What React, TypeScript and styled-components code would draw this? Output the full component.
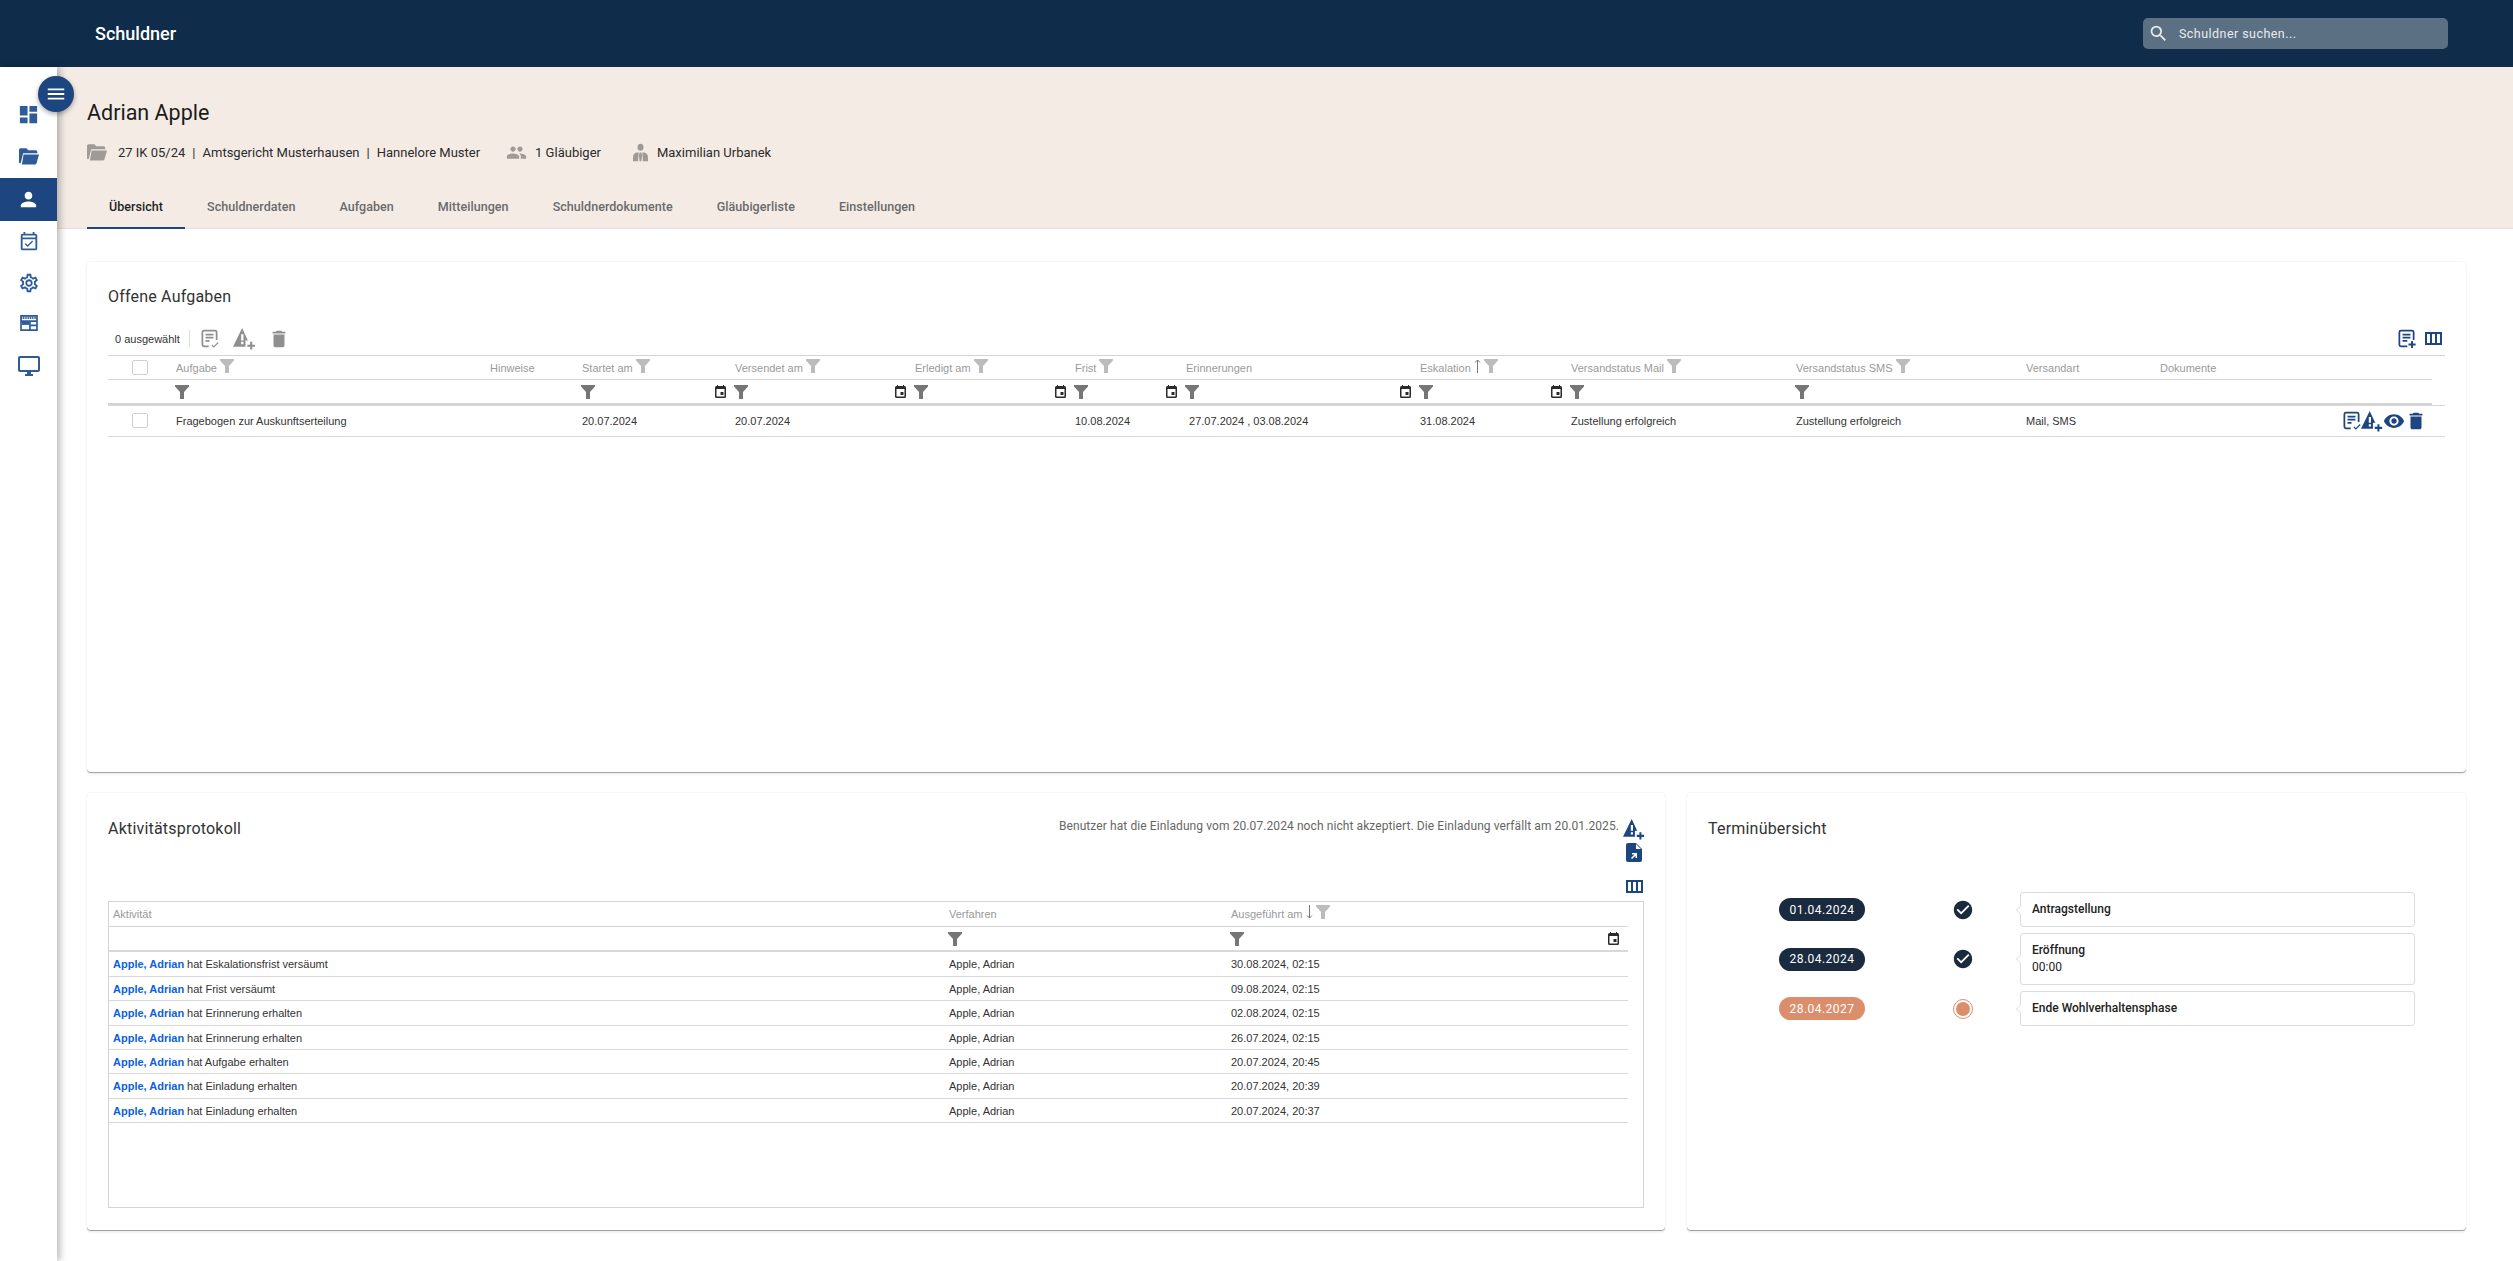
import React from 'react';
import styled, { createGlobalStyle } from 'styled-components';
import {
  MdDashboard,
  MdPerson,
  MdOutlineEventAvailable,
  MdOutlineSettings,
  MdOutlineDesktopWindows,
  MdMenu,
  MdSearch,
  MdVisibility,
  MdDelete,
  MdCheckCircle,
  MdPeople,
} from 'react-icons/md';

const NAVY = '#1d4580';
const TASK_COLUMNS =
  '68px 314px 92px 153px 180px 160px 111px 234px 151px 225px 230px 134px 1fr';
const LOG_COLUMNS = '840px 282px 1fr';

const GlobalStyle = createGlobalStyle`
  html, body {
    margin: 0;
    padding: 0;
    background: #ffffff;
  }
  body {
    font-family: Roboto, "Liberation Sans", sans-serif;
    color: #222222;
  }
`;

const Page = styled.div`
  width: 2513px;
  height: 1261px;
  display: flex;
  flex-direction: column;
  overflow: hidden;
`;

const TopBar = styled.header`
  height: 67px;
  flex: none;
  background: #0f2c4a;
  display: flex;
  align-items: center;
  justify-content: space-between;
  padding: 0 65px 0 95px;
`;

const AppTitle = styled.div`
  color: #ffffff;
  font-size: 18px;
  font-weight: 500;
`;

const SearchBox = styled.div`
  width: 305px;
  height: 31px;
  box-sizing: border-box;
  margin-top: -1px;
  padding-left: 5px;
  border-radius: 5px;
  background: #5c7084;
  color: #e8ebee;
  display: flex;
  align-items: center;
  gap: 10px;
  font-size: 12.5px;
  letter-spacing: 0.45px;
`;

const Body = styled.div`
  flex: 1;
  display: flex;
  position: relative;
`;

const Sidebar = styled.nav`
  width: 57px;
  flex: none;
  box-sizing: border-box;
  padding-top: 26px;
  background: #ffffff;
  box-shadow: 3px 0 7px rgba(0, 0, 0, 0.28);
  position: relative;
  z-index: 1;
  display: flex;
  flex-direction: column;
`;

const NavItem = styled.div<{ $active?: boolean; $height: number }>`
  height: ${p => p.$height}px;
  display: flex;
  align-items: center;
  justify-content: center;
  background: ${p => (p.$active ? NAVY : 'transparent')};
  color: ${p => (p.$active ? '#ffffff' : '#2f5c98')};
`;

const MenuButton = styled.button`
  position: absolute;
  left: 38px;
  top: 9px;
  z-index: 2;
  width: 36px;
  height: 36px;
  padding: 0;
  border: none;
  border-radius: 50%;
  background: ${NAVY};
  color: #ffffff;
  display: flex;
  align-items: center;
  justify-content: center;
  box-shadow: 0 2px 5px rgba(0, 0, 0, 0.35);
`;

const Main = styled.main`
  flex: 1;
  min-width: 0;
`;

const Banner = styled.section`
  height: 162px;
  box-sizing: border-box;
  padding: 31px 0 0 30px;
  background: #f4ebe5;
  border-bottom: 1px solid #e6e1dd;
  display: flex;
  flex-direction: column;
`;

const DebtorName = styled.h1`
  margin: 0;
  font-size: 21.5px;
  line-height: 30px;
  font-weight: 400;
  color: #1c1c1c;
`;

const InfoRow = styled.div`
  margin-top: 12px;
  height: 24px;
  display: flex;
  align-items: center;
  font-size: 13px;
  color: #2b2b2b;
`;

const InfoItem = styled.div<{ $gap: number; $left?: number }>`
  display: flex;
  align-items: center;
  gap: ${p => p.$gap}px;
  margin-left: ${p => p.$left ?? 0}px;
  color: #2b2b2b;

  svg {
    color: #a09a96;
    flex: none;
  }
`;

const Pipe = styled.span`
  margin: 0 7px;
`;

const Tabs = styled.div`
  margin-top: auto;
  display: flex;
`;

const Tab = styled.div<{ $active?: boolean }>`
  height: 44px;
  box-sizing: border-box;
  padding: 1px 22px 0;
  display: flex;
  align-items: center;
  font-size: 12.5px;
  font-weight: 500;
  letter-spacing: 0.05px;
  color: ${p => (p.$active ? '#1f1f1f' : '#6a6a6a')};
  border-bottom: 2px solid ${p => (p.$active ? NAVY : 'transparent')};
  margin-bottom: -1px;
`;

const Content = styled.div`
  padding: 33px 47px 0 30px;
  display: flex;
  flex-direction: column;
  gap: 21px;
`;

const Card = styled.section<{ $height: number; $top: number }>`
  height: ${p => p.$height}px;
  box-sizing: border-box;
  padding: ${p => p.$top}px 21px 0;
  background: #ffffff;
  border-radius: 4px;
  box-shadow: 0 1px 0 #a4a4a4, 0 0 0 1px #f6f6f6, 0 2px 3px rgba(0, 0, 0, 0.1);
`;

const CardTitle = styled.h2`
  margin: 0;
  font-size: 16px;
  line-height: 20px;
  font-weight: 400;
  letter-spacing: 0.2px;
  color: #333333;
`;

const Toolbar = styled.div`
  height: 48px;
  box-sizing: border-box;
  padding: 15px 3px 0 7px;
  display: flex;
  align-items: center;
  font-family: "Liberation Sans", sans-serif;
  font-size: 11px;
  color: #333333;
`;

const ToolDivider = styled.span`
  width: 1px;
  height: 17px;
  margin: 0 10px 0 9px;
  background: #dddddd;
`;

const ToolIcon = styled.span<{ $color?: string; $gap?: number }>`
  display: flex;
  color: ${p => p.$color ?? '#8f8f8f'};
  margin-right: ${p => p.$gap ?? 0}px;
`;

const ToolSpacer = styled.span`
  flex: 1;
`;

const TaskTable = styled.div`
  border-top: 1px solid #d4d4d4;
  font-family: "Liberation Sans", sans-serif;
  font-size: 11px;
`;

const Row = styled.div<{ $columns: string; $height: number; $inset?: number; $line?: string }>`
  display: grid;
  grid-template-columns: ${p => p.$columns};
  height: ${p => p.$height}px;
  box-sizing: border-box;
  margin-right: ${p => p.$inset ?? 0}px;
  border-bottom: ${p => p.$line ?? '1px solid #d8d8d8'};
`;

// first data row runs one pixel under the filter row, its top line shows past the end of it
const JoinedRow = styled(Row)`
  margin-top: -1px;
  box-shadow: inset 0 1px 0 #d8d8d8;
`;

const HeadCell = styled.div`
  display: flex;
  align-items: center;
  gap: 3px;
  color: #9a9a9a;
  white-space: nowrap;
  min-width: 0;

  > svg {
    margin-bottom: 4px;
    color: #bcbcbc;
    flex: none;
  }
`;

const FilterCell = styled.div`
  display: flex;
  align-items: center;
  justify-content: space-between;
  padding: 0 9px 0 0;
  min-width: 0;

  > svg:first-child {
    margin-left: -1px;
    color: #767676;
  }
`;

const DataCell = styled.div`
  display: flex;
  align-items: center;
  color: #333333;
  white-space: nowrap;
  min-width: 0;
`;

const CheckCell = styled.div`
  display: flex;
  align-items: center;
  padding-left: 24px;
`;

const CheckBox = styled.span`
  width: 14px;
  height: 13px;
  border: 1px solid #cfcfcf;
  border-radius: 2px;
`;

const RowActions = styled.div`
  display: flex;
  align-items: center;
  justify-content: flex-end;
  padding-right: 18px;
  color: ${NAVY};
`;

const BottomRow = styled.div`
  display: grid;
  grid-template-columns: 1578px 779px;
  gap: 22px;
`;

const LogHead = styled.div`
  height: 82px;
  display: flex;
  justify-content: space-between;
  align-items: flex-start;
`;

const InviteNotice = styled.div`
  display: flex;
  align-items: flex-start;
  gap: 5px;
  font-size: 12px;
  line-height: 14px;
  letter-spacing: 0.09px;
  color: #666666;
`;

const IconStack = styled.div`
  width: 20px;
  margin-top: -1px;
  display: flex;
  flex-direction: column;
  align-items: center;
  gap: 3px;
  color: ${NAVY};
`;

const ColumnsSlot = styled.span`
  display: flex;
  margin-top: 15px;
`;

const LogTable = styled.div`
  height: 307px;
  box-sizing: border-box;
  border: 1px solid #d4d4d4;
  font-family: "Liberation Sans", sans-serif;
  font-size: 11px;
`;

const LogFirstCell = styled(DataCell)`
  padding-left: 4px;
`;

const LogHeadFirst = styled(HeadCell)`
  padding-left: 4px;
`;

const UserName = styled.span`
  color: #0b5fe0;
  font-weight: 700;
  margin-right: 3px;
`;

const Timeline = styled.div`
  margin-top: 53px;
  padding-left: 71px;
  display: flex;
  flex-direction: column;
  gap: 6px;
`;

const TimelineRow = styled.div`
  display: grid;
  grid-template-columns: 175px 66px 395px;
  align-items: center;
`;

const DatePill = styled.div<{ $color: string }>`
  width: 86px;
  height: 23px;
  border-radius: 12px;
  background: ${p => p.$color};
  color: #ffffff;
  font-size: 12px;
  letter-spacing: 0.45px;
  display: flex;
  align-items: center;
  justify-content: center;
`;

const Marker = styled.div`
  display: flex;
  margin-left: -2px;
  color: #1a2a3f;
`;

const OpenMarker = styled.span`
  width: 14px;
  height: 14px;
  margin-left: 2px;
  border: 2px solid #ffffff;
  outline: 1px solid #dc8e6c;
  border-radius: 50%;
  background: #dc8e6c;
`;

const EventBox = styled.div`
  position: relative;
  box-sizing: border-box;
  padding: 8px 11px;
  border: 1px solid #dcdcdc;
  border-radius: 3px;
  background: #ffffff;
  font-size: 12px;
  line-height: 17px;
  color: #222222;

  &::before {
    content: '';
    position: absolute;
    left: -5px;
    top: 50%;
    width: 9px;
    height: 9px;
    background: #ffffff;
    border-left: 1px solid #dcdcdc;
    border-bottom: 1px solid #dcdcdc;
    transform: translateY(-50%) rotate(45deg) scaleX(0.7) scaleY(0.7);
  }
`;

const EventTitle = styled.div`
  font-weight: 500;
`;

type IconProps = { size?: number; w?: number; h?: number };

const Funnel = ({ w = 14, h = 14 }: IconProps) => (
  <svg width={w} height={h} viewBox="0 0 14 14" fill="currentColor">
    <path d="M0 0h14v1.5L9 7v7H5V7L0 1.5z" />
  </svg>
);

const SmallCalendar = () => (
  <svg width="11" height="13" viewBox="0 0 11 13" style={{ color: '#2a2a2a' }}>
    <path
      fill="currentColor"
      d="M2 0h1v1h5V0h1v1h.5A1.5 1.5 0 0 1 11 2.5v9A1.5 1.5 0 0 1 9.500 13h-8A1.500 1.500 0 0 1 0 11.500v-9A1.500 1.500 0 0 1 1.500 1H2z"
    />
    <path fill="#ffffff" d="M1.500 4h8v7.500h-8z" />
    <path fill="currentColor" d="M5.500 7h3v3h-3z" />
  </svg>
);

const TaskDone = ({ size = 18 }: IconProps) => (
  <svg width={size} height={size} viewBox="0 0 24 24" fill="none" stroke="currentColor">
    <path strokeWidth="2.200" d="M11 22H5a2 2 0 0 1-2-2V4a2 2 0 0 1 2-2h14a2 2 0 0 1 2 2v10" />
    <path strokeWidth="2.200" d="M7 7h10M7 11h10M7 15h5" />
    <path strokeWidth="1.500" d="M15 20l2.500 2.500L23 17" />
  </svg>
);

const TaskAdd = ({ size = 18 }: IconProps) => (
  <svg width={size} height={size} viewBox="0 0 24 24" fill="none" stroke="currentColor">
    <path strokeWidth="2.200" d="M13 22H5a2 2 0 0 1-2-2V4a2 2 0 0 1 2-2h14a2 2 0 0 1 2 2v10" />
    <path strokeWidth="2.200" d="M7 7h10M7 11h10M7 15h6" />
    <path strokeWidth="2.400" d="M19 15v9M14.500 19.500h9" />
  </svg>
);

const WarnAdd = ({ size = 22 }: IconProps) => (
  <svg width={size} height={size} viewBox="0 0 24 24">
    <path fill="currentColor" d="M9.500 1l9 19.500H0z" />
    <path fill="#ffffff" d="M8.500 7.500h2.400v6.500H8.500zM8.500 15.500h2.400v2.400H8.500z" />
    <path fill="#ffffff" d="M13 14h11v10H13z" />
    <path stroke="currentColor" strokeWidth="2.200" d="M19 15.500v8M15 19.500h8" />
  </svg>
);

const ColumnsIcon = ({ w = 17, h = 13 }: IconProps) => (
  <svg width={w} height={h} viewBox="0 0 17 13" fill="none" stroke="currentColor" strokeWidth="2">
    <path d="M1 1h15v11H1zM6 1v11M11 1v11" />
  </svg>
);

const FileMove = () => (
  <svg width="16" height="19" viewBox="0 0 16 19">
    <path fill="currentColor" d="M2 0h8l6 6v11a2 2 0 0 1-2 2H2a2 2 0 0 1-2-2V2a2 2 0 0 1 2-2z" />
    <path fill="#ffffff" d="M6 10h5v5H9.500v-2.300L6 16l-1-1 3.400-3.500H6zM10 1l5 5h-5z" />
  </svg>
);

const FolderOpen = ({ size = 22, w, h }: IconProps) => (
  <svg width={w ?? size} height={h ?? size} viewBox="0 0 24 20" fill="currentColor">
    <path d="M2 0h7l2 2.500h9a2 2 0 0 1 2 2V6H5L2 18H1.500A1.500 1.500 0 0 1 0 16.500V2a2 2 0 0 1 2-2z" />
    <path d="M5.500 7.500H24l-3 10.500a2 2 0 0 1-2 1.500H3.500z" />
  </svg>
);

const BoardLayout = () => (
  <svg width="18" height="16" viewBox="0 0 19 17" fill="none" stroke="currentColor" strokeWidth="1.800">
    <path d="M1 1h17v15H1z" />
    <path strokeWidth="2.600" d="M1 3h17" strokeDasharray="1.200 0.700" />
    <path d="M1 6.500h17M10.500 6.500V16M10.500 11h7.500" />
    <path fill="currentColor" stroke="none" d="M2 7h8v3.500H2z" />
  </svg>
);

const ConsultantIcon = () => (
  <svg width="15" height="19" viewBox="0 0 17 20" fill="currentColor">
    <ellipse cx="8.500" cy="4" rx="3.400" ry="4" />
    <path d="M0 20v-5a5 5 0 0 1 5-5h1.500l-.7 10zM17 20v-5a5 5 0 0 0-5-5h-1.500l.7 10zM7.500 10h2l.8 3-.8 7h-2l-.8-7z" />
  </svg>
);

const SortArrow = ({ up }: { up?: boolean }) => (
  <svg width="7" height="14" viewBox="0 0 7 14" fill="none" stroke="#777777" strokeWidth="1">
    {up ? <path d="M3.500 14V1M1 3.500L3.500 1 6 3.500" /> : <path d="M3.500 0v13M1 10.500L3.500 13 6 10.500" />}
  </svg>
);

const taskHeaders: { label: string; filter?: boolean; sort?: boolean }[] = [
  { label: 'Aufgabe', filter: true },
  { label: 'Hinweise' },
  { label: 'Startet am', filter: true },
  { label: 'Versendet am', filter: true },
  { label: 'Erledigt am', filter: true },
  { label: 'Frist', filter: true },
  { label: 'Erinnerungen' },
  { label: 'Eskalation', filter: true, sort: true },
  { label: 'Versandstatus Mail', filter: true },
  { label: 'Versandstatus SMS', filter: true },
  { label: 'Versandart' },
  { label: 'Dokumente' },
];

// [funnel, calendar] per column of the filter row
const taskFilters: [boolean, boolean][] = [
  [true, false],
  [false, false],
  [true, true],
  [true, true],
  [true, true],
  [true, true],
  [true, true],
  [true, true],
  [true, false],
  [true, false],
  [false, false],
  [false, false],
];

const taskRow = [
  'Fragebogen zur Auskunftserteilung',
  '',
  '20.07.2024',
  '20.07.2024',
  '',
  '10.08.2024',
  '\u00a027.07.2024 , 03.08.2024',
  '31.08.2024',
  'Zustellung erfolgreich',
  'Zustellung erfolgreich',
  'Mail, SMS',
];

const logRows = [
  ['Eskalationsfrist versäumt', '30.08.2024, 02:15', 25],
  ['Frist versäumt', '09.08.2024, 02:15', 24],
  ['Erinnerung erhalten', '02.08.2024, 02:15', 25],
  ['Erinnerung erhalten', '26.07.2024, 02:15', 24],
  ['Aufgabe erhalten', '20.07.2024, 20:45', 24],
  ['Einladung erhalten', '20.07.2024, 20:39', 25],
  ['Einladung erhalten', '20.07.2024, 20:37', 24],
] as [string, string, number][];

const tabs = [
  'Übersicht',
  'Schuldnerdaten',
  'Aufgaben',
  'Mitteilungen',
  'Schuldnerdokumente',
  'Gläubigerliste',
  'Einstellungen',
];

const App = () => (
  <Page>
    <GlobalStyle />
    <TopBar>
      <AppTitle>Schuldner</AppTitle>
      <SearchBox>
        <MdSearch size={21} />
        Schuldner suchen...
      </SearchBox>
    </TopBar>
    <Body>
      <Sidebar>
        <NavItem $height={42}><MdDashboard size={23} /></NavItem>
        <NavItem $height={43}><FolderOpen w={20} h={17} /></NavItem>
        <NavItem $height={43} $active><MdPerson size={23} /></NavItem>
        <NavItem $height={42}><MdOutlineEventAvailable size={22} /></NavItem>
        <NavItem $height={40}><MdOutlineSettings size={22} /></NavItem>
        <NavItem $height={40}><BoardLayout /></NavItem>
        <NavItem $height={46}><MdOutlineDesktopWindows size={24} /></NavItem>
      </Sidebar>
      <MenuButton aria-label="Menü">
        <MdMenu size={22} />
      </MenuButton>
      <Main>
        <Banner>
          <DebtorName>Adrian Apple</DebtorName>
          <InfoRow>
            <InfoItem $gap={11}>
              <FolderOpen w={20} h={17} />
              <span>
                27 IK 05/24<Pipe>|</Pipe>Amtsgericht Musterhausen<Pipe>|</Pipe>Hannelore Muster
              </span>
            </InfoItem>
            <InfoItem $gap={8} $left={26}>
              <MdPeople size={21} />
              <span>1 Gläubiger</span>
            </InfoItem>
            <InfoItem $gap={9} $left={32}>
              <ConsultantIcon />
              <span>Maximilian Urbanek</span>
            </InfoItem>
          </InfoRow>
          <Tabs>
            {tabs.map((tab, index) => (
              <Tab key={tab} $active={index === 0}>{tab}</Tab>
            ))}
          </Tabs>
        </Banner>
        <Content>
          <Card $height={510} $top={25}>
            <CardTitle>Offene Aufgaben</CardTitle>
            <Toolbar>
              0 ausgewählt
              <ToolDivider />
              <ToolIcon $gap={14}><TaskDone size={19} /></ToolIcon>
              <ToolIcon $gap={12}><WarnAdd size={23} /></ToolIcon>
              <ToolIcon><MdDelete size={22} /></ToolIcon>
              <ToolSpacer />
              <ToolIcon $color={NAVY} $gap={9}><TaskAdd size={19} /></ToolIcon>
              <ToolIcon $color={NAVY}><ColumnsIcon /></ToolIcon>
            </Toolbar>
            <TaskTable>
              <Row $columns={TASK_COLUMNS} $height={24} $inset={13} $line="1px solid #d4d4d4">
                <CheckCell><CheckBox /></CheckCell>
                {taskHeaders.map(head => (
                  <HeadCell key={head.label}>
                    {head.label}
                    {head.sort && <SortArrow up />}
                    {head.filter && <Funnel w={14} h={14} />}
                  </HeadCell>
                ))}
              </Row>
              <Row $columns={TASK_COLUMNS} $height={26} $inset={13} $line="3px solid #d3d3d3">
                <span />
                {taskFilters.map(([funnel, calendar], index) => (
                  <FilterCell key={index}>
                    {funnel ? <Funnel w={14} h={14} /> : <span />}
                    {calendar && <SmallCalendar />}
                  </FilterCell>
                ))}
              </Row>
              <JoinedRow $columns={TASK_COLUMNS} $height={32}>
                <CheckCell><CheckBox /></CheckCell>
                {taskRow.map((value, index) => (
                  <DataCell key={index}>{value}</DataCell>
                ))}
                <RowActions>
                  <TaskDone size={19} />
                  <WarnAdd size={22} />
                  <MdVisibility size={22} />
                  <MdDelete size={22} />
                </RowActions>
              </JoinedRow>
            </TaskTable>
          </Card>
          <BottomRow>
            <Card $height={437} $top={26}>
              <LogHead>
                <CardTitle>Aktivitätsprotokoll</CardTitle>
                <InviteNotice>
                  Benutzer hat die Einladung vom 20.07.2024 noch nicht akzeptiert. Die Einladung verfällt am 20.01.2025.
                  <IconStack>
                    <WarnAdd size={22} />
                    <FileMove />
                    <ColumnsSlot><ColumnsIcon /></ColumnsSlot>
                  </IconStack>
                </InviteNotice>
              </LogHead>
              <LogTable>
                <Row $columns={LOG_COLUMNS} $height={25} $inset={15} $line="1px solid #d4d4d4">
                  <LogHeadFirst>Aktivität</LogHeadFirst>
                  <HeadCell>Verfahren</HeadCell>
                  <HeadCell>
                    Ausgeführt am
                    <SortArrow />
                    <Funnel w={14} h={14} />
                  </HeadCell>
                </Row>
                <Row $columns={LOG_COLUMNS} $height={25} $inset={15} $line="2px solid #d8d8d8">
                  <span />
                  <FilterCell><Funnel w={14} h={14} /></FilterCell>
                  <FilterCell>
                    <Funnel w={14} h={14} />
                    <SmallCalendar />
                  </FilterCell>
                </Row>
                {logRows.map(([activity, date, height], index) => (
                  <Row key={index} $columns={LOG_COLUMNS} $height={height} $inset={15}>
                    <LogFirstCell>
                      <UserName>Apple, Adrian</UserName>hat {activity}
                    </LogFirstCell>
                    <DataCell>Apple, Adrian</DataCell>
                    <DataCell>{date}</DataCell>
                  </Row>
                ))}
              </LogTable>
            </Card>
            <Card $height={437} $top={26}>
              <CardTitle>Terminübersicht</CardTitle>
              <Timeline>
                <TimelineRow>
                  <DatePill $color="#1a2a3f">01.04.2024</DatePill>
                  <Marker><MdCheckCircle size={22} /></Marker>
                  <EventBox><EventTitle>Antragstellung</EventTitle></EventBox>
                </TimelineRow>
                <TimelineRow>
                  <DatePill $color="#1a2a3f">28.04.2024</DatePill>
                  <Marker><MdCheckCircle size={22} /></Marker>
                  <EventBox>
                    <EventTitle>Eröffnung</EventTitle>
                    00:00
                  </EventBox>
                </TimelineRow>
                <TimelineRow>
                  <DatePill $color="#dc8e6c">28.04.2027</DatePill>
                  <Marker><OpenMarker /></Marker>
                  <EventBox><EventTitle>Ende Wohlverhaltensphase</EventTitle></EventBox>
                </TimelineRow>
              </Timeline>
            </Card>
          </BottomRow>
        </Content>
      </Main>
    </Body>
  </Page>
);

export default App;
